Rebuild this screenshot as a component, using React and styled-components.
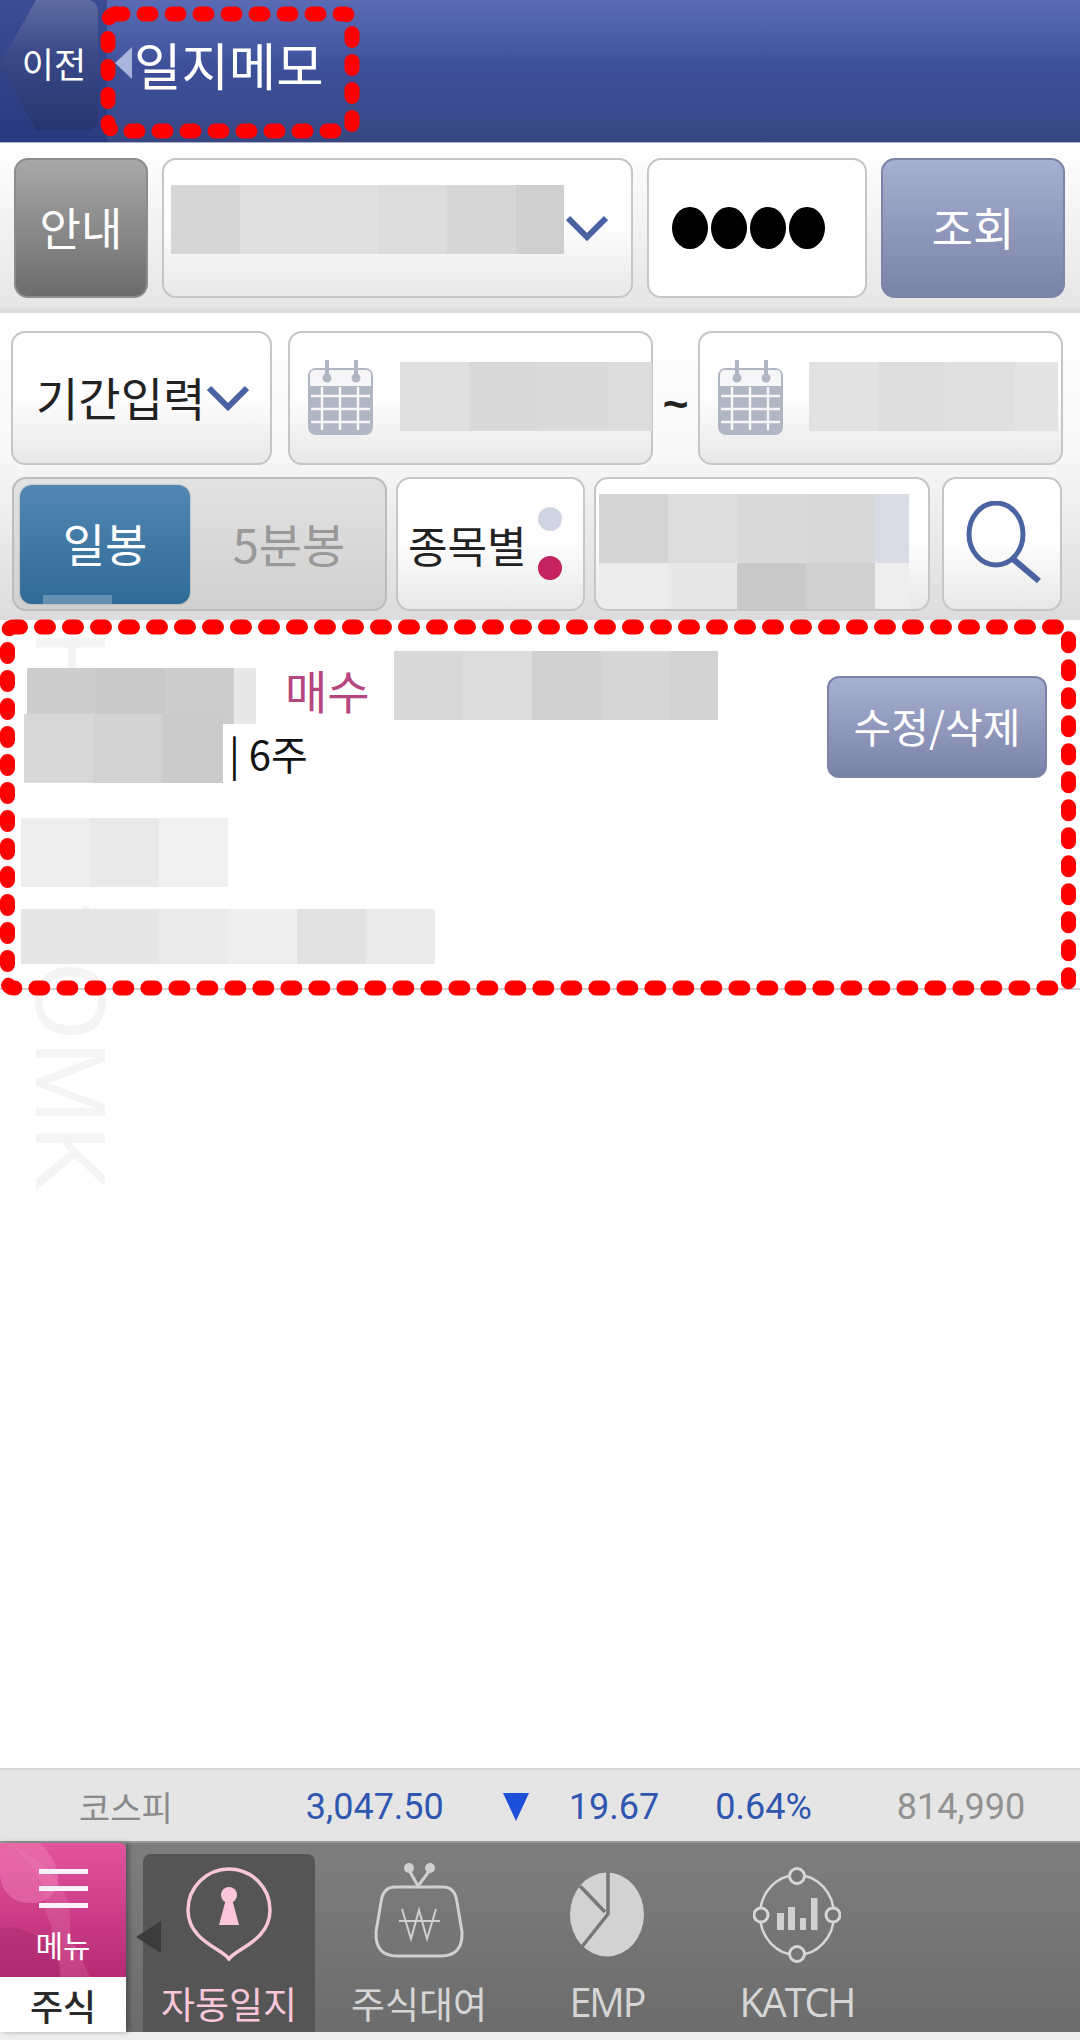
import React from "react";
import styled, { createGlobalStyle } from "styled-components";

const Global = createGlobalStyle`
  html, body { margin: 0; padding: 0; background: #fff; }
  body { font-family: "Noto Sans CJK KR", "Noto Sans", sans-serif; }
  * { box-sizing: border-box; }
`;

const Page = styled.div`
  position: relative;
  width: 1080px;
  height: 2040px;
  display: flex;
  flex-direction: column;
  overflow: hidden;
  background: #fff;
`;

/* header */
const Header = styled.header`
  height: 143px;
  flex: none;
  display: flex;
  align-items: center;
  background: linear-gradient(#5a6bb4 0%, #4e60aa 22%, #3d4f99 48%, #3b4b90 75%, #364681 100%);
  border-bottom: 1px solid #aeb4c8;
`;
const BackPanel = styled.div`
  width: 107px;
  height: 100%;
  flex: none;
  background: linear-gradient(#3c4c92, #2a3a7e);
`;
const BackButton = styled.div`
  width: 98px;
  height: 130px;
  display: flex;
  align-items: center;
  justify-content: center;
  padding: 0 0 6px 10px;
  color: #fff;
  font-size: 35px;
  line-height: 1;
  background: linear-gradient(#5f6ba2 0%, #3c4a8a 40%, #26346f 100%);
  clip-path: path("M0 64 L36 0 L86 0 Q98 0 98 12 L98 118 Q98 130 86 130 L36 130 Z");
`;
const TitleArrow = styled.span`
  width: 0;
  height: 0;
  margin: 0 0 16px 8px;
  border-style: solid;
  border-width: 16px 17px 16px 0;
  border-color: transparent #aab4dc transparent transparent;
`;
const Title = styled.h1`
  margin: 0 0 14px 2px;
  color: #fff;
  font-size: 51.5px;
  font-weight: 400;
  line-height: 1;
`;

/* controls */
const SearchBar = styled.div`
  height: 170px;
  flex: none;
  display: flex;
  gap: 14px;
  padding: 15px 15px 0 14px;
  background: linear-gradient(#fff 0%, #e6e6e6 96%, #d8d8d8 100%);
`;
const Filters = styled.div`
  height: 307px;
  flex: none;
  padding: 18px 17px 0 11px;
  display: flex;
  flex-direction: column;
  gap: 12px;
  background: linear-gradient(#fff 0%, #f8f8f8 45%, #dcdcdc 100%);
`;
const FilterRow = styled.div`
  height: 134px;
  display: flex;
  align-items: stretch;
`;
const Box = styled.div`
  width: ${(p) => p.$w}px;
  margin-left: ${(p) => p.$ml || 0}px;
  flex: none;
  display: flex;
  align-items: center;
  border: 2px solid #c6c6c6;
  border-radius: 14px;
  color: #222;
  background: linear-gradient(#fff 0%, #fdfdfd 50%, #e8e8e8 100%);
`;
const SolidButton = styled.button`
  width: ${(p) => p.$w}px;
  height: 140px;
  flex: none;
  padding: 0 0 4px;
  border: 2px solid ${(p) => (p.$tone === "grey" ? "#8c8c8c" : "#7c84a8")};
  border-radius: 14px;
  color: #fff;
  font: inherit;
  font-size: 45px;
  line-height: 1;
  background: ${(p) =>
    p.$tone === "grey"
      ? "linear-gradient(#a8a8a8, #6c6c6c)"
      : "linear-gradient(#a6b0d0, #7a82a8)"};
`;
const SelectBox = styled(Box)`
  height: 140px;
  padding-left: 7px;
`;
const PasswordBox = styled(Box)`
  height: 140px;
  padding-left: 23px;
  gap: 3.5px;
  background: #fff;
`;
const PasswordDot = styled.span`
  width: 35.5px;
  height: 42px;
  border-radius: 50%;
  background: #000;
`;
const Chevron = styled.svg`
  flex: none;
  margin-left: ${(p) => p.$ml || 0}px;
  width: 42px;
  height: 26px;
  fill: none;
  stroke: #4a62a2;
  stroke-width: 6;
`;
const BoxLabel = styled.span`
  font-size: ${(p) => p.$size || 46}px;
  line-height: 1;
  white-space: nowrap;
  margin-left: ${(p) => p.$ml || 0}px;
  padding-bottom: ${(p) => p.$pb || 0}px;
`;
const Tilde = styled.span`
  width: 45px;
  flex: none;
  margin-top: 12px;
  text-align: center;
  align-self: center;
  font-size: 44px;
  font-weight: 700;
  line-height: 1;
  color: #222;
  font-family: "Liberation Sans", sans-serif;
`;
const Gap = styled.span`
  width: ${(p) => p.$w}px;
  flex: none;
`;
const Toggle = styled.div`
  width: 375px;
  margin-left: 1px;
  flex: none;
  display: flex;
  align-items: center;
  padding: 0 7px 0 6px;
  border: 2px solid #bcbcbc;
  border-radius: 14px;
  background: linear-gradient(#e2e2e2, #d0d0d0);
`;
const ToggleOn = styled.div`
  position: relative;
  width: 170px;
  height: 119px;
  display: flex;
  align-items: center;
  justify-content: center;
  padding-bottom: 4px;
  border-radius: 12px;
  color: #fff;
  font-size: 46px;
  line-height: 1;
  background: linear-gradient(#5287b3, #2f6a96);
  box-shadow: 0 0 2px #8894a4;
`;
const ToggleStrip = styled.span`
  position: absolute;
  left: 23px;
  bottom: 0;
  width: 69px;
  height: 9px;
  background: rgba(255, 255, 255, 0.25);
`;
const ToggleOff = styled.div`
  flex: 1;
  text-align: center;
  padding: 0 0 4px 10px;
  color: #999;
  font-size: 47px;
  line-height: 1;
`;
const RadioStack = styled.div`
  display: flex;
  flex-direction: column;
  gap: 25px;
  margin-left: 11px;
  margin-top: -2px;
`;
const Radio = styled.span`
  width: 24px;
  height: 24px;
  border-radius: 50%;
  background: ${(p) => p.$c};
`;
const CodeBox = styled(Box)`
  padding: 15px 0 0 3px;
  align-items: flex-start;
  overflow: hidden;
`;
const Stack = styled.div`
  display: flex;
  flex-direction: column;
`;

/* pixelated (redacted) strips */
const Pixels = styled.div`
  display: flex;
  flex: none;
  height: ${(p) => p.$h}px;
  margin-bottom: ${(p) => p.$mb || 0}px;
`;
const Pixel = styled.span`
  display: block;
  width: ${(p) => p.$w}px;
  height: 100%;
  background: ${(p) => p.$c};
`;
const Blur = ({ h, mb, cells }) => (
  <Pixels $h={h} $mb={mb}>
    {cells.map(([w, c], i) => (
      <Pixel key={i} $w={w} $c={c} />
    ))}
  </Pixels>
);

/* record */
const Record = styled.section`
  position: relative;
  height: 370px;
  flex: none;
  display: flex;
  border-bottom: 2px solid #d0d0d0;
  background: #fff;
`;
const RecordBody = styled.div`
  position: relative;
  z-index: 1;
  flex: 1;
  padding-top: 31px;
`;
const TradeLine = styled.div`
  display: flex;
  align-items: flex-start;
  margin-left: 27px;
`;
const TradeSpacer = styled.div`
  padding-top: 17px;
`;
const TradeKind = styled.span`
  margin: 15px 0 0 29px;
  color: #b5467f;
  font-size: 46px;
  line-height: 1;
`;
const TradeCode = styled.div`
  margin-left: 24px;
`;
const QtyLine = styled.div`
  display: flex;
  align-items: flex-start;
  margin: -10px 0 0 24px;
`;
const Qty = styled.span`
  margin: 17px 0 0 3px;
  padding: 0 0 0 3px;
  background: #fff;
  color: #111;
  font-size: 40px;
  line-height: 1.1;
`;
const NoteBlock = styled.div`
  margin: ${(p) => p.$mt}px 0 0 21px;
`;
const EditButton = styled.button`
  position: relative;
  z-index: 1;
  width: 220px;
  height: 102px;
  flex: none;
  margin: 56px 33px 0 0;
  padding: 0 0 4px;
  border: 2px solid #7c84a8;
  border-radius: 12px;
  color: #fff;
  font: inherit;
  font-size: 41px;
  line-height: 1;
  white-space: nowrap;
  background: linear-gradient(#a6b0d0, #7a82a8);
`;
const Watermark = styled.div`
  position: absolute;
  left: 21px;
  top: 630px;
  writing-mode: vertical-rl;
  font-family: "Liberation Sans", sans-serif;
  font-size: 100px;
  line-height: 100px;
  letter-spacing: 1px;
  white-space: pre;
  color: #f4f4f4;
`;

const Filler = styled.div`
  flex: 1;
`;

/* ticker */
const Ticker = styled.div`
  height: 73px;
  flex: none;
  display: flex;
  align-items: center;
  border-top: 2px solid #d8d8d8;
  background: #e5e5e5;
  font-family: Roboto, sans-serif;
  font-size: 36px;
  line-height: 1;
  padding-top: 3px;
`;
const TickerName = styled.span`
  margin-left: 79px;
  font-family: "Noto Sans CJK KR", sans-serif;
  font-size: 34px;
  color: #8a8a8a;
`;
const TickerValue = styled.span`
  margin-left: ${(p) => p.$ml}px;
  color: ${(p) => p.$c || "#2f57b0"};
`;
const DownMark = styled.span`
  width: 0;
  height: 0;
  margin-left: ${(p) => p.$ml}px;
  border-style: solid;
  border-width: 28px 13.5px 0 13.5px;
  border-color: #1c50d8 transparent transparent transparent;
`;

/* tab bar */
const TabBar = styled.nav`
  position: relative;
  height: 191px;
  flex: none;
  display: flex;
  background: linear-gradient(#7e7e7e 0%, #6c6c6c 100%);
  border-top: 2px solid #9a9a9a;
`;
const MenuColumn = styled.div`
  width: 126px;
  flex: none;
  display: flex;
  flex-direction: column;
  margin-right: 8px;
  box-shadow: 3px 0 5px rgba(0, 0, 0, 0.3);
`;
const MenuPink = styled.div`
  position: relative;
  height: 134px;
  flex: none;
  overflow: hidden;
  display: flex;
  flex-direction: column;
  align-items: center;
  padding-top: 26px;
  border-top-right-radius: 6px;
  background: linear-gradient(#e2549c, #b72a74);
`;
const Swirl = styled.svg`
  position: absolute;
  left: 0;
  top: 0;
  width: 126px;
  height: 134px;
`;
const BurgerLine = styled.span`
  position: relative;
  width: 49px;
  height: 5px;
  margin-bottom: 12px;
  background: #fdf2f7;
`;
const MenuText = styled.span`
  position: relative;
  margin-top: 9px;
  color: #fff;
  font-size: 30px;
  line-height: 1;
`;
const MenuCaption = styled.div`
  flex: 1;
  display: flex;
  align-items: center;
  justify-content: center;
  background: #fff;
  color: #2a2a2a;
  font-size: 36px;
  font-weight: 500;
  line-height: 1;
`;
const CollapseArrow = styled.span`
  position: absolute;
  left: 136px;
  top: 78px;
  z-index: 1;
  width: 0;
  height: 0;
  border-style: solid;
  border-width: 16px 25px 16px 0;
  border-color: transparent #3c3c3c transparent transparent;
`;
const Tab = styled.div`
  width: 190px;
  flex: none;
  display: flex;
  padding: 0 9px;
  margin-left: ${(p) => p.$ml || 0}px;
`;
const TabInner = styled.div`
  flex: 1;
  margin-top: ${(p) => (p.$active ? 11 : 0)}px;
  display: flex;
  flex-direction: column;
  align-items: center;
  border-radius: 8px 8px 0 0;
  background: ${(p) => (p.$active ? "#555" : "transparent")};
  color: ${(p) => (p.$active ? "#f9c6da" : "#d6d6d6")};
`;
const IconSlot = styled.div`
  height: ${(p) => p.$h}px;
  flex: none;
  display: flex;
  align-items: flex-end;
  justify-content: center;
`;
const TabLabel = styled.span`
  margin-top: auto;
  padding-bottom: 8px;
  font-size: 37px;
  line-height: 1.1;
  white-space: nowrap;
`;
const LatinLabel = styled(TabLabel)`
  font-family: "Open Sans", sans-serif;
  letter-spacing: -2px;
  font-size: 39.5px;
`;
const BottomEdge = styled.div`
  height: 8px;
  flex: none;
  background: #eee;
`;

/* annotations */
const Marks = styled.svg`
  position: absolute;
  left: 0;
  top: 0;
  z-index: 2;
  width: 1080px;
  height: 2040px;
  pointer-events: none;
  fill: none;
  stroke: #ff0000;
  stroke-width: 15;
  stroke-linecap: round;
  stroke-dasharray: 7 21;
`;

const ChevronIcon = ({ ml }) => (
  <Chevron $ml={ml} viewBox="0 0 42 26">
    <path d="M2 3 L21 22 L40 3" />
  </Chevron>
);

const CalendarIcon = () => (
  <svg width="67" height="76" viewBox="0 0 67 76" style={{ flex: "none" }}>
    <rect x="1" y="8" width="65" height="67" rx="8" fill="#b1b6c5" />
    <path d="M3 26 V15 Q3 10 8 10 H59 Q64 10 64 15 V26 Z" fill="#f6f6f8" />
    <g fill="#b1b6c5">
      <rect x="18" y="0" width="4" height="18" />
      <circle cx="20" cy="18" r="4.5" />
      <rect x="47" y="0" width="4" height="18" />
      <circle cx="49" cy="18" r="4.5" />
    </g>
    <g stroke="#f6f6f8" strokeWidth="2.5">
      <path d="M4 36 H63 M4 49 H63 M4 62 H63" />
      <path d="M15 27 V70 M33 27 V70 M51 27 V70" />
    </g>
  </svg>
);

const SearchIcon = () => (
  <svg width="84" height="86" viewBox="0 0 84 86" style={{ flex: "none", marginLeft: 15 }}>
    <ellipse cx="37" cy="33" rx="27" ry="31" fill="none" stroke="#4c63a2" strokeWidth="5" />
    <path d="M54 58 L80 80" stroke="#4c63a2" strokeWidth="6" />
  </svg>
);

const PinIcon = () => (
  <svg width="86" height="94" viewBox="0 0 86 94">
    <path d="M43 92 C37 82 2 74 2 43 A41 41 0 0 1 84 43 C84 74 49 82 43 92 Z" fill="none" stroke="#f9c6da" strokeWidth="3.5" />
    <circle cx="43" cy="28" r="8" fill="#f9c6da" />
    <path d="M40 32 L33 58 H53 L46 32 Z" fill="#f9c6da" />
  </svg>
);

const PurseIcon = () => (
  <svg width="92" height="97" viewBox="0 0 92 97" fill="none" stroke="#d0d0d0">
    <circle cx="36" cy="6" r="5" fill="#d0d0d0" stroke="none" />
    <circle cx="57" cy="6" r="5" fill="#d0d0d0" stroke="none" />
    <path d="M36 8 L45 24 L57 8" strokeWidth="3" />
    <path d="M22 25 H70 Q82 25 84 40 L89 70 Q90 94 68 94 H24 Q2 94 3 70 L8 40 Q10 25 22 25 Z" strokeWidth="3" />
    <path d="M29 47 L38 77 L46 48 L54 77 L63 47 M26 59 H67" strokeWidth="2" />
  </svg>
);

const PieIcon = () => (
  <svg width="76" height="85" viewBox="0 0 76 85">
    <ellipse cx="38" cy="42.5" rx="37" ry="42" fill="#d2d2d2" />
    <path d="M39 -1 V42 L12 76 M11 14 L36 40" fill="none" stroke="#777" strokeWidth="3.5" />
  </svg>
);

const CycleIcon = () => (
  <svg width="88" height="98" viewBox="0 0 88 98" fill="none" stroke="#d6d6d6">
    <ellipse cx="44" cy="49" rx="37" ry="40" strokeWidth="2.5" />
    <g fill="#767676" strokeWidth="3">
      <circle cx="44" cy="10" r="7.5" />
      <circle cx="44" cy="88" r="7.5" />
      <circle cx="8" cy="49" r="7" />
      <circle cx="80" cy="49" r="7" />
    </g>
    <g fill="#d0d0d0" stroke="none">
      <rect x="24" y="47" width="7" height="17" />
      <rect x="35" y="41" width="7" height="23" />
      <rect x="47" y="52" width="6" height="12" />
      <rect x="58" y="32" width="6.5" height="32" />
    </g>
  </svg>
);

export default function App() {
  return (
    <Page>
      <Global />
      <Header>
        <BackPanel>
          <BackButton>이전</BackButton>
        </BackPanel>
        <TitleArrow />
        <Title>일지메모</Title>
      </Header>

      <SearchBar>
        <SolidButton $w={134} $tone="grey">안내</SolidButton>
        <SelectBox $w={471}>
          <Blur h={69} mb={18} cells={[[69, "#d6d6d6"], [69, "#e0e0e0"], [69, "#e0e0e0"], [69, "#dcdcdc"], [69, "#d6d6d6"], [48, "#cfcfcf"]]} />
          <ChevronIcon ml={2} />
        </SelectBox>
        <PasswordBox $w={220}>
          <PasswordDot />
          <PasswordDot />
          <PasswordDot />
          <PasswordDot />
        </PasswordBox>
        <SolidButton $w={184}>조회</SolidButton>
      </SearchBar>

      <Filters>
        <FilterRow>
          <Box $w={261}>
            <BoxLabel $ml={23} $pb={4}>기간입력</BoxLabel>
            <ChevronIcon ml={2} />
          </Box>
          <Box $w={365} $ml={16}>
            <Gap $w={17} />
            <CalendarIcon />
            <Gap $w={26} />
            <Blur h={69} mb={3} cells={[[69, "#e0e0e0"], [69, "#d8d8d8"], [69, "#dadada"], [45, "#dcdcdc"]]} />
          </Box>
          <Tilde>~</Tilde>
          <Box $w={365}>
            <Gap $w={17} />
            <CalendarIcon />
            <Gap $w={25} />
            <Blur h={69} mb={3} cells={[[69, "#e2e2e2"], [68, "#dedede"], [69, "#e0e0e0"], [43, "#e4e4e4"]]} />
          </Box>
        </FilterRow>
        <FilterRow>
          <Toggle>
            <ToggleOn>
              일봉
              <ToggleStrip />
            </ToggleOn>
            <ToggleOff>5분봉</ToggleOff>
          </Toggle>
          <Box $w={189} $ml={9}>
            <BoxLabel $ml={10} $size={43}>종목별</BoxLabel>
            <RadioStack>
              <Radio $c="#d0d4e2" />
              <Radio $c="#c4235f" />
            </RadioStack>
          </Box>
          <CodeBox $w={336} $ml={9}>
            <Stack>
              <Blur h={69} cells={[[69, "#d4d4d4"], [69, "#dedede"], [69, "#dadada"], [69, "#d8d8d8"], [34, "#d9dce5"]]} />
              <Blur h={46} cells={[[69, "#ececec"], [69, "#e8e8e8"], [69, "#c9c9c9"], [69, "#d0d0d0"], [34, "#eeeeee"]]} />
            </Stack>
          </CodeBox>
          <Box $w={120} $ml={12}>
            <SearchIcon />
          </Box>
        </FilterRow>
      </Filters>

      <Record>
        <RecordBody>
          <TradeLine>
            <TradeSpacer>
              <Blur h={56} cells={[[69, "#cdcdcd"], [69, "#c9c9c9"], [69, "#cdcdcd"], [22, "#e8e8e8"]]} />
            </TradeSpacer>
            <TradeKind>매수</TradeKind>
            <TradeCode>
              <Blur h={69} cells={[[69, "#d8d8d8"], [69, "#dcdcdc"], [69, "#d0d0d0"], [69, "#d6d6d6"], [48, "#d2d2d2"]]} />
            </TradeCode>
          </TradeLine>
          <QtyLine>
            <Blur h={69} cells={[[69, "#d8d8d8"], [69, "#d2d2d2"], [61, "#cbcbcb"]]} />
            <Qty>| 6주</Qty>
          </QtyLine>
          <NoteBlock $mt={35}>
            <Blur h={69} cells={[[69, "#eeeeee"], [69, "#e9e9e9"], [69, "#f0f0f0"]]} />
          </NoteBlock>
          <NoteBlock $mt={22}>
            <Blur h={55} cells={[[69, "#e6e6e6"], [69, "#e6e6e6"], [69, "#ebebeb"], [69, "#efefef"], [69, "#e2e2e2"], [69, "#eaeaea"]]} />
          </NoteBlock>
        </RecordBody>
        <EditButton>수정/삭제</EditButton>
      </Record>
      <Watermark>{"H       t.OMK"}</Watermark>

      <Filler />

      <Ticker>
        <TickerName>코스피</TickerName>
        <TickerValue $ml={133}>3,047.50</TickerValue>
        <DownMark $ml={59} />
        <TickerValue $ml={40}>19.67</TickerValue>
        <TickerValue $ml={56}>0.64%</TickerValue>
        <TickerValue $ml={85} $c="#919191">814,990</TickerValue>
      </Ticker>

      <TabBar>
        <MenuColumn>
          <MenuPink>
            <Swirl viewBox="0 0 126 134">
              <path d="M0 0 H40 C70 30 60 60 30 60 C10 60 0 45 0 30 Z" fill="#ec79b2" opacity="0.55" />
              <path d="M0 85 C30 80 60 105 62 134 H0 Z" fill="#a92a6e" opacity="0.45" />
              <path d="M10 0 C45 22 75 40 70 92 L90 134 H60 C60 110 52 80 45 70 C50 40 30 20 10 0 Z" fill="#f08cc0" opacity="0.22" />
            </Swirl>
            <BurgerLine />
            <BurgerLine />
            <BurgerLine />
            <MenuText>메뉴</MenuText>
          </MenuPink>
          <MenuCaption>주식</MenuCaption>
        </MenuColumn>
        <CollapseArrow />
        <Tab>
          <TabInner $active>
            <IconSlot $h={107}>
              <PinIcon />
            </IconSlot>
            <TabLabel>자동일지</TabLabel>
          </TabInner>
        </Tab>
        <Tab>
          <TabInner>
            <IconSlot $h={116}>
              <PurseIcon />
            </IconSlot>
            <TabLabel>주식대여</TabLabel>
          </TabInner>
        </Tab>
        <Tab $ml={-2}>
          <TabInner>
            <IconSlot $h={114}>
              <PieIcon />
            </IconSlot>
            <LatinLabel>EMP</LatinLabel>
          </TabInner>
        </Tab>
        <Tab>
          <TabInner>
            <IconSlot $h={121}>
              <CycleIcon />
            </IconSlot>
            <LatinLabel>KATCH</LatinLabel>
          </TabInner>
        </Tab>
      </TabBar>
      <BottomEdge />

      <Marks viewBox="0 0 1080 2040">
        <rect x="108" y="14" width="244" height="117" rx="8" />
        <rect x="7.5" y="627" width="1061" height="361" rx="6" />
      </Marks>
    </Page>
  );
}
